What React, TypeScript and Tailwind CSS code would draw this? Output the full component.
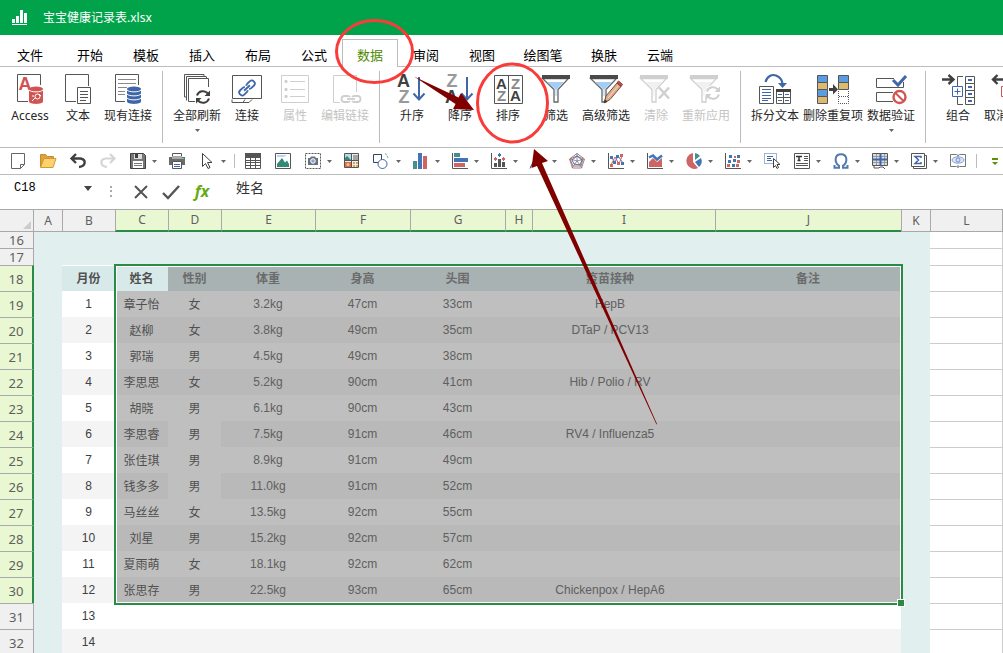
import React from "react";
import clsx from "clsx";

const DARK = "#555555";
const INK = "#404040";
const BLUE = "#3f66a8";
const RED = "#d05454";
const PALE = "#cfcfcf";

const Big = ({ children }: { children: React.ReactNode }) => (
  <svg
    viewBox="0 0 32 32"
    className="h-8 w-8 shrink-0 overflow-visible"
    fill="none"
    aria-hidden="true"
  >
    {children}
  </svg>
);

const Small = ({ children }: { children: React.ReactNode }) => (
  <svg
    viewBox="0 0 16 16"
    className="h-4 w-4 overflow-visible"
    fill="none"
    aria-hidden="true"
  >
    {children}
  </svg>
);

const Caret = ({ className }: { className?: string }) => (
  <svg viewBox="0 0 5 3" className={clsx("h-[3px] w-[5px]", className)} aria-hidden="true">
    <path d="M0 0h5L2.5 3z" fill="currentColor" />
  </svg>
);

const Cylinder = ({ color }: { color: string }) => (
  <>
    <path d="M15 16.500v12c0 3.200 14 3.200 14 0v-12z" fill={color} />
    <ellipse cx="22" cy="16" rx="7" ry="2.500" fill={color} />
  </>
);

const Refresh = ({ color, x, y }: { color: string; x: number; y: number }) => (
  <g transform={`translate(${x} ${y})`}>
    <path d="M-6 -1.500C-4.500-6 1.500-7.500 5-3.500M6 1.500C4.500 6-1.500 7.500-5 3.500" stroke={color} strokeWidth="2" />
    <path d="M7-6.500v5.500H1.500zM-7 6.500V1h5.500z" fill={color} />
  </g>
);

const Chain = ({ color }: { color: string }) => (
  <g stroke={color} strokeWidth="1.800">
    <path d="M-3-3h-3.500a3 3 0 0 0 0 6H-3a3 3 0 0 0 2-1M-1-2a3 3 0 0 0-2-1" />
    <path d="M3-3h3.500a3 3 0 0 1 0 6H3a3 3 0 0 1-2-1M1-2a3 3 0 0 1 2-1" />
    <path d="M-4 0h8" />
  </g>
);

const Funnel = ({ off }: { off?: boolean }) => (
  <>
    <path
      d="M2.500 5.500h26L18 16.500V29h-4V16.500z"
      fill="#fff"
      stroke={off ? PALE : "#666"}
      strokeWidth="1.300"
    />
    <path d="M7 9h17l-7.500 7.500V23h-1v-6.500z" fill={off ? "#f0f0f0" : "#a3cdf7"} />
    <path d="M2 2h28v4H2z" fill={off ? PALE : "#4a4a4a"} />
  </>
);

type LetterProps = { x: number; y: number; s: number; c: string; children: string };

const Letter = ({ x, y, s, c, children }: LetterProps) => (
  <text
    x={x}
    y={y}
    fontSize={s}
    fill={c}
    fontWeight="700"
    textAnchor="middle"
    fontFamily="Liberation Sans, sans-serif"
  >
    {children}
  </text>
);

const DownArrow = () => (
  <path d="M23 4v22M17.500 20.500l5.500 6 5.500-6" stroke={BLUE} strokeWidth="2" />
);

const icons: Record<string, React.ReactNode> = {
  access: (
    <>
      <path d="M26.500 12V1.500h-23v27H14" stroke={DARK} />
      <Letter x={11} y={17} s={18} c={RED}>A</Letter>
      <Cylinder color={RED} />
      <path d="M15 17c2 2.500 12 2.500 14 0M18 28l4-4M25 21l2 2M19 22v2" stroke="#fff" />
      <circle cx="23.500" cy="23.500" r="2.500" stroke="#fff" />
    </>
  ),
  text: (
    <>
      <path d="M26.500 13V1.500h-23v27H14" stroke={DARK} />
      <path d="M15.500 14.500h13v16h-13z" stroke={DARK} />
      <path d="M18 18.500h8M18 21.500h8M18 24.500h8M18 27.500h6" stroke={DARK} />
    </>
  ),
  existing: (
    <>
      <path d="M26.500 12V1.500h-23v27H13" stroke={DARK} />
      <path d="M6 6.500h18M6 10.500h18M6 14.500h9M6 18.500h7M6 21.500h7" stroke="#888" />
      <Cylinder color={BLUE} />
      <path d="M15 17c2 2.500 12 2.500 14 0M15 21c2 2.500 12 2.500 14 0M15 25c2 2.500 12 2.500 14 0" stroke="#fff" />
    </>
  ),
  refresh: (
    <>
      <path d="M3.500 24V1.500H23M5.500 27.500V3.500H25" stroke={DARK} />
      <path d="M27.500 14V5.500h-20v23H14M23 1.500v2M25.500 3.500v2M3.500 24h2" stroke={DARK} />
      <Refresh color={INK} x={22} y={24} />
    </>
  ),
  link: (
    <>
      <path d="M1.500 2.500h29v23h-29z" stroke={DARK} />
      <path d="M1 26.500v3h17l3-3M18 29.500h-6l2-3" stroke={DARK} />
      <g transform="translate(16 15) rotate(-43)">
        <Chain color={BLUE} />
      </g>
    </>
  ),
  props: (
    <>
      <path d="M2.500 2.500h27v27h-27z" stroke={PALE} />
      <path d="M11 8.500h15M11 16.500h15M11 23.500h15" stroke={PALE} />
      <path d="M6 7.500h2v2H6zM6 15.500h2v2H6zM6 22.500h2v2H6z" stroke={PALE} fill={PALE} />
    </>
  ),
  editLink: (
    <>
      <path d="M27.500 19V2.500h-23v27H11" stroke={PALE} />
      <g transform="translate(22 26)">
        <Chain color={PALE} />
      </g>
    </>
  ),
  asc: (
    <>
      <Letter x={7.5} y={14} s={18} c={INK}>A</Letter>
      <Letter x={8} y={30} s={18} c="#999">Z</Letter>
      <DownArrow />
    </>
  ),
  desc: (
    <>
      <Letter x={8} y={14} s={18} c="#999">Z</Letter>
      <Letter x={7.5} y={30} s={18} c={INK}>A</Letter>
      <DownArrow />
    </>
  ),
  sort: (
    <>
      <path d="M2.500 2.500h28v28h-28zM16.500 2.500v28" stroke={DARK} />
      <Letter x={9.5} y={16} s={15} c={INK}>A</Letter>
      <Letter x={9.5} y={28} s={15} c="#888">Z</Letter>
      <Letter x={23.5} y={16} s={15} c="#888">Z</Letter>
      <Letter x={23.5} y={28} s={15} c={INK}>A</Letter>
    </>
  ),
  filter: <Funnel />,
  advFilter: (
    <g transform="translate(-2)">
      <Funnel />
      <path d="M16 30l2-7 11-13 4 3.500-11 13z" fill="#dfb08f" stroke="#76493c" />
      <path d="M29 10l4 3.500 1.500-2-4-3.500z" fill="#c74c48" stroke="#843c38" />
      <path d="M16 30l1-3.500 2.500 2z" fill="#333" />
      <path d="M20 25l10-12" stroke="#f4d5bd" />
    </g>
  ),
  clear: (
    <g transform="translate(-2)">
      <Funnel off />
      <path d="M21 14.500l10 11M31 14.500l-10 11" stroke={PALE} strokeWidth="2.500" />
    </g>
  ),
  reapply: (
    <g transform="translate(-2)">
      <Funnel off />
      <circle cx="25" cy="20" r="8" fill="#fff" />
      <Refresh color={PALE} x={25} y={20} />
    </g>
  ),
  split: (
    <>
      <path d="M6.500 9C8 3 13 1 17 2.500c4 1.500 6 4 6.500 8" stroke={BLUE} strokeWidth="2.200" />
      <path d="M19 10h9l-4.500 5z" fill={BLUE} />
      <path d="M.5 13.500h14v17H.5zM17.500 16.500h14v14h-14z" stroke={DARK} />
      <path d="M17 16h15v3H17z" fill={INK} />
      <path d="M3 16.500h9M3 19.500h9M3 22.500h9M3 25.500h9M3 27.500h6" stroke={BLUE} />
      <path d="M24.500 19v11M18 24.500h13" stroke={DARK} />
      <path d="M19 21.500h4M26 21.500h4M19 27.500h4M26 27.500h4" stroke={BLUE} />
    </>
  ),
  dedupe: (
    <>
      <path d="M.5 2.500h10v7H.5zM.5 16.500h10v7H.5zM21.500 2.500h10v7h-10z" fill="#5b9be0" stroke={DARK} />
      <path d="M.5 9.500h10v7H.5zM.5 23.500h10v7H.5zM21.500 9.500h10v7h-10z" fill="#dcb870" stroke={DARK} />
      <path d="M21.500 18v12.500h10V18M22 23.500h9" stroke={DARK} strokeDasharray="1 1" />
      <path d="M12 15h4v-4l5 5.500-5 5V18h-4z" fill={INK} />
    </>
  ),
  validate: (
    <>
      <path d="M19 5.500H1.500v9h27V9M18 19.500H1.500v9H18" stroke={DARK} />
      <path d="M18 7l5 5 8-9" stroke={BLUE} strokeWidth="3" />
      <circle cx="24.500" cy="24" r="6" stroke={RED} strokeWidth="2.400" fill="#fff" />
      <path d="M20.500 20l8 8" stroke={RED} strokeWidth="2" />
    </>
  ),
  group: (
    <>
      <path d="M0 6.500h10M6.500 2l5 4.500-5 4.500" stroke={INK} strokeWidth="2.400" />
      <path d="M21 3.500h-5.500V14M15.500 24v7.500H21" stroke={DARK} />
      <path d="M10.500 13.500h10v10h-10z" stroke={BLUE} />
      <path d="M12.500 18.500h6M15.500 15.500v6" stroke={BLUE} />
      <path d="M23.500 3.500h9v28h-9zM24 10.500h8M24 17.500h8M24 24.500h8" stroke={DARK} />
      <path d="M26 7h4M26 14h4M26 21h4M26 28h4" stroke={BLUE} strokeWidth="2" />
    </>
  ),
  ungroup: (
    <>
      <path d="M2 6.500h10M5.500 2L1 6.500 5.500 11" stroke={INK} strokeWidth="2.400" />
      <path d="M9.500 13.500h10v10h-10z" stroke={RED} />
    </>
  ),
};

const axes = <path d="M.5 0v15.500H16" stroke={DARK} />;

const tools: { name: string; icon?: React.ReactNode; menu?: boolean; sep?: boolean }[] = [
  { name: "新建", icon: <path d="M1.500.5h13v11l-4 4h-9zM14.500 11.500h-4v4" fill="#fff" stroke="#666" /> },
  {
    name: "打开",
    icon: (
      <>
        <path d="M.5 14V1.500h5l2 2h6V6" fill="#e0a23c" stroke="#c98a2a" />
        <path d="M.5 14.500L4 5.500h12l-3 9z" fill="#fbd26c" stroke="#d19a38" />
      </>
    ),
  },
  {
    name: "撤销",
    icon: <path d="M6 1L1.500 5.500 6 10M2 5.500h8.500c6 1 5.500 8-1.500 8.500" stroke={INK} strokeWidth="2.400" />,
  },
  {
    name: "恢复",
    icon: <path d="M10 1l4.500 4.500L10 10M14 5.500H5.500c-6 1-5.500 8 1.500 8.500" stroke="#d5d5d5" strokeWidth="2.200" />,
  },
  {
    name: "保存",
    menu: true,
    icon: (
      <>
        <path d="M.5.5h13l2 2v13H.5z" fill="#777" stroke={INK} />
        <path d="M4 1h8v5H4z" fill="#ddd" />
        <path d="M5 1h3v4H5z" fill={INK} />
        <path d="M3 8h10v7H3z" fill="#fff" />
        <path d="M4 10.500h8M4 12.500h8" stroke="#777" />
      </>
    ),
  },
  {
    name: "打印",
    icon: (
      <>
        <path d="M3.500.5h9v5h-9z" fill="#fff" stroke={DARK} />
        <path d="M0 4h16v8H0z" fill="#6b6b6b" />
        <path d="M3 3h10v3H3z" fill="#aaa" />
        <path d="M13 5.500h2" stroke="#5cc" />
        <path d="M3.500 8.500h9v7h-9z" fill="#fff" stroke={DARK} />
        <path d="M5 11.500h6M5 13.500h6" stroke={BLUE} />
      </>
    ),
  },
  {
    name: "选择",
    menu: true,
    icon: <path d="M3.500.5v13l3-3 2.500 5 2-1-2.500-5h4.500z" fill="#fff" stroke={INK} />,
  },
  { name: "sep1", sep: true },
  {
    name: "表格",
    icon: (
      <>
        <path d="M.5.5h15v15H.5zM.5 7.500h15M.5 9.500h15M.5 12.500h15M5.500 4v11M10.500 4v11" stroke={DARK} />
        <path d="M0 0h16v5H0z" fill={DARK} />
      </>
    ),
  },
  {
    name: "图片",
    icon: (
      <>
        <path d="M.5.5h15v15H.5z" fill="#fff" stroke={DARK} />
        <path d="M2 2h10L9 4H2zM5 5h3" fill="#b6d6f1" />
        <path d="M2 14v-3l5-6 3 4.500 2-2 2 3.500v3z" fill="#328a76" />
      </>
    ),
  },
  {
    name: "截图",
    menu: true,
    icon: (
      <>
        <path d="M.5.5h15v15H.5z" stroke={DARK} strokeDasharray="2 1" />
        <path d="M3 5h2l1-1.500h4L11 5h2v7H3z" fill="#6a7078" />
        <circle cx="8" cy="8" r="2.300" fill="#7fa8d8" stroke="#fff" />
      </>
    ),
  },
  {
    name: "图库",
    icon: (
      <>
        <path d="M.5.5h14v14H.5z" fill="#eee" stroke="#555" />
        <path d="M1 1h6v6H1z" fill="#b7dbea" />
        <path d="M1 7V5l2-2 4 4z" fill="#328a76" />
        <path d="M9 2h5v5H9z" fill="#a4a4a4" />
        <path d="M1 9h6v5H1z" fill="#dc6a55" />
        <circle cx="4" cy="11.500" r="1.500" fill="#f3c56a" />
        <path d="M9 9h2v2H9zM12 9h2v2h-2zM9 12h2v2H9zM12 12h2v2h-2z" fill="#d9a550" />
        <path d="M7.500 0v15M0 7.500h15" stroke="#555" />
      </>
    ),
  },
  {
    name: "形状",
    menu: true,
    icon: (
      <>
        <path d="M-.5 1.500h8v8h-8z" fill="#fff" stroke="#346" />
        <path d="M11.500.5l3 5" stroke="#5a9c8c" strokeDasharray="2 1" />
        <circle cx="8.500" cy="11" r="4.500" fill="#fff" stroke={BLUE} />
      </>
    ),
  },
  {
    name: "柱形图",
    menu: true,
    icon: (
      <>
        <path d="M0 8h4v8H0z" fill="#43908d" />
        <path d="M5 0h4v16H5z" fill="#4274b8" />
        <path d="M10 3h4v13h-4z" fill="#cf6464" />
      </>
    ),
  },
  {
    name: "条形图",
    menu: true,
    icon: (
      <>
        {axes}
        <path d="M2 0h6v4H2z" fill="#43908d" />
        <path d="M2 5h14v4H2z" fill="#4274b8" />
        <path d="M2 10h11v4H2z" fill="#cf6464" />
      </>
    ),
  },
  {
    name: "组合图",
    menu: true,
    icon: (
      <>
        {axes}
        <path d="M3 10h3v4H3zM7 6h3v8H7zM11 9h3v5h-3z" fill={DARK} />
        <path d="M4 4h1v1h1v2H5v1H4V7H3V5h1zM12 4h1v1h1v2h-1v1h-1V7h-1V5h1z" fill="#cf6464" />
        <path d="M8 0h1v1h1v2H9v1H8V3H7V1h1z" fill="#4274b8" />
      </>
    ),
  },
  {
    name: "曲面图",
    menu: true,
    icon: (
      <>
        <path d="M0 14L8 3v8z" fill="#4274b8" />
        <path d="M8 3l8 4-5 1z" fill="#cf6464" />
        <path d="M0 15.500L3 9" stroke={DARK} />
      </>
    ),
  },
  {
    name: "雷达图",
    menu: true,
    icon: (
      <>
        <path d="M8 .5l7.500 5.500-3 9h-9l-3-9z" stroke="#888" />
        <path d="M8 0v8l7-2M8 8l5 7M8 8l-5 7M8 8L1 6" stroke="#777" strokeWidth="0.800" />
        <path d="M8 3l6 3-2 7H4L1 6z" stroke="#cf6464" />
        <path d="M8 3l5 4-2 5-6-1-2-4z" stroke="#4274b8" />
      </>
    ),
  },
  {
    name: "折线图",
    menu: true,
    icon: (
      <>
        {axes}
        <path d="M3 4l4 5 3-6 5 7" stroke="#4274b8" />
        <path d="M3 12l4-8 4 7 3-8" stroke="#cf6464" />
        <path d="M2 11h3v3H2zM9 9h3v3H9zM12 1h3v3h-3z" fill="#cf6464" />
        <path d="M2 3h3v3H2zM8 2h3v3H8zM13 9h3v3h-3zM5 8h3v3H5z" fill="#4274b8" />
      </>
    ),
  },
  {
    name: "面积图",
    menu: true,
    icon: (
      <>
        {axes}
        <path d="M2 14V9l4-4 4 4 5-4v9z" fill="#cf6464" />
        <path d="M2 4.500L6 2.500l4 4 5-4" stroke="#4274b8" strokeWidth="2.500" />
      </>
    ),
  },
  {
    name: "饼图",
    menu: true,
    icon: (
      <>
        <path d="M7 0v9l5 6A8 8 0 1 1 7 0z" fill="#cf6464" />
        <path d="M9 0a7 7 0 0 1 5 3L9 7z" fill="#43908d" />
        <path d="M15 5a8 8 0 0 1-2 9L9 9z" fill="#4274b8" />
      </>
    ),
  },
  {
    name: "散点图",
    menu: true,
    icon: (
      <>
        {axes}
        <path d="M4 2h3v3H4zM12 2h3v3h-3zM8 6h3v3H8zM3 7h3v3H3zM7 11h3v3H7z" fill="#4274b8" />
        <path d="M9 3h2v2H9zM12 7h3v3h-3zM11 11h3v3h-3zM2 11h3v3H2z" fill="#cf6464" />
      </>
    ),
  },
  {
    name: "选择对象",
    icon: (
      <>
        <path d="M.5.5h12v10H.5z" stroke={BLUE} strokeDasharray="1 1" />
        <path d="M3 3.500h6M3 5.500h4M3 7.500h5" stroke={BLUE} />
        <path d="M9.500 5.500v9l2-2 1.500 3 1.500-1-1.500-3h3z" fill="#fff" stroke={INK} />
      </>
    ),
  },
  {
    name: "文本框",
    menu: true,
    icon: (
      <>
        <path d="M.5.5h15v15H.5z" fill="#fff" stroke={DARK} />
        <path d="M2 3.500h6M5 3.500V8M3.500 7.500h3" stroke="#333" strokeWidth="1.500" />
        <path d="M10 3.500h4M10 5.500h4M10 7.500h4M2 10.500h12M2 12.500h12" stroke={DARK} />
      </>
    ),
  },
  {
    name: "符号",
    menu: true,
    icon: (
      <path
        d="M1.500 12v2.800H6v-2C1 9 1.500 1.200 8 1.200s7 7.800 2 11.600v2h4.500V12"
        stroke="#5379ad"
        strokeWidth="2"
      />
    ),
  },
  {
    name: "冻结",
    menu: true,
    icon: (
      <>
        <path d="M.5.5h15v12H.5z" fill="#ddd" stroke={DARK} />
        <path d="M1 3.500h14M1 9.500h14M4.500 1v11M12.500 1v11" stroke="#999" />
        <path d="M0 6.500h16M8.500 0v13" stroke={BLUE} strokeWidth="2" />
        <path d="M2 13v2h5l1-1h3l2 2" stroke={DARK} />
      </>
    ),
  },
  {
    name: "求和",
    menu: true,
    icon: (
      <>
        <path d="M14 2.500h1.500v13h-13V14" stroke={DARK} />
        <path d="M.5.500h13v13H.5z" fill="#fff" stroke={DARK} />
        <path d="M10 5V3.500H4L7.500 7 4 10.500h6V9" stroke={BLUE} strokeWidth="1.500" />
      </>
    ),
  },
  {
    name: "阅读",
    icon: (
      <>
        <path d="M.5 1.500h6l1.500 1 1.500-1h6v12h-6l-1.500 1-1.500-1h-6zM8 2v2M8 12v2" stroke="#777" />
        <ellipse cx="8" cy="7" rx="6" ry="3.200" fill="#dce6f8" stroke="#86a0d4" />
        <circle cx="8" cy="7" r="2" stroke="#6f8dcc" />
      </>
    ),
  },
  { name: "sep2", sep: true },
];

type Item = { label: string; icon: string; w: string; off?: boolean; menu?: boolean };

const groups: Item[][] = [
  [
    { label: "Access", icon: "access", w: "w-12" },
    { label: "文本", icon: "text", w: "w-12" },
    { label: "现有连接", icon: "existing", w: "w-13" },
  ],
  [
    { label: "全部刷新", icon: "refresh", w: "w-13", menu: true },
    { label: "连接", icon: "link", w: "w-12" },
    { label: "属性", icon: "props", w: "w-12", off: true },
    { label: "编辑链接", icon: "editLink", w: "w-13", off: true },
  ],
  [
    { label: "升序", icon: "asc", w: "w-12" },
    { label: "降序", icon: "desc", w: "w-12" },
    { label: "排序", icon: "sort", w: "w-12" },
    { label: "筛选", icon: "filter", w: "w-12" },
    { label: "高级筛选", icon: "advFilter", w: "w-13" },
    { label: "清除", icon: "clear", w: "w-12", off: true },
    { label: "重新应用", icon: "reapply", w: "w-13", off: true },
  ],
  [
    { label: "拆分文本", icon: "split", w: "w-13" },
    { label: "删除重复项", icon: "dedupe", w: "w-16" },
    { label: "数据验证", icon: "validate", w: "w-13", menu: true },
  ],
  [
    { label: "组合", icon: "group", w: "w-12" },
    { label: "取消组合", icon: "ungroup", w: "w-13" },
  ],
];

const tabs = ["文件", "开始", "模板", "插入", "布局", "公式", "数据", "审阅", "视图", "绘图笔", "换肤", "云端"];

const columns = [
  { name: "A", w: "w-[28px]" },
  { name: "B", w: "w-[53px]" },
  { name: "C", w: "w-[53px]" },
  { name: "D", w: "w-[53px]" },
  { name: "E", w: "w-[94px]" },
  { name: "F", w: "w-[95px]" },
  { name: "G", w: "w-[95px]" },
  { name: "H", w: "w-[27px]" },
  { name: "I", w: "w-[183px]" },
  { name: "J", w: "w-[186px]" },
  { name: "K", w: "w-[29px]" },
  { name: "L", w: "w-[72px]" },
];

const records = [
  ["1", "章子怡", "女", "3.2kg", "47cm", "33cm", "HepB"],
  ["2", "赵柳", "女", "3.8kg", "49cm", "35cm", "DTaP / PCV13"],
  ["3", "郭瑞", "男", "4.5kg", "49cm", "38cm", ""],
  ["4", "李思思", "女", "5.2kg", "90cm", "41cm", "Hib / Polio / RV"],
  ["5", "胡晓", "男", "6.1kg", "90cm", "43cm", ""],
  ["6", "李思睿", "男", "7.5kg", "91cm", "46cm", "RV4 / Influenza5"],
  ["7", "张佳琪", "男", "8.9kg", "91cm", "49cm", ""],
  ["8", "钱多多", "男", "11.0kg", "91cm", "52cm", ""],
  ["9", "马丝丝", "女", "13.5kg", "92cm", "55cm", ""],
  ["10", "刘星", "男", "15.2kg", "92cm", "57cm", ""],
  ["11", "夏雨萌", "女", "18.1kg", "92cm", "62cm", ""],
  ["12", "张思存", "男", "22.5kg", "93cm", "65cm", "Chickenpox / HepA6"],
];

const RowHead = ({ n, on }: { n: number; on?: boolean }) => (
  <th
    scope="row"
    className={clsx(
      "p-0 text-center text-[13px] leading-4 font-normal text-[#5f5f5f] font-['Noto_Sans','Noto_Sans_CJK_SC',sans-serif]",
      n > 16 && "border-t border-t-[#a9a9a9]",
      on ? "border-r-2 border-r-[#2a8b46] bg-[#e9f8d2]" : "border-r border-r-[#a9a9a9] bg-[#f0f0f0]"
    )}
  >
    {n}
  </th>
);

const Outer = ({ first }: { first?: boolean }) => (
  <>
    <td className="bg-[#e1efee] p-0"></td>
    <td className={clsx("bg-white p-0", !first && "border-t border-[#ccc]")}></td>
    <td className="border-l border-[#ccc] bg-white p-0"></td>
  </>
);

const Sheet = () => (
  <div className="relative">
    <table className="w-full table-fixed border-separate border-spacing-0 text-center text-xs leading-4">
      <thead>
        <tr className="h-[23px]">
          <th className="w-[34px] border-y border-r border-[#a9a9a9] bg-[#f0f0f0] p-0">
            <svg viewBox="0 0 8 8" className="mt-2 mr-0.5 ml-auto h-2 w-2" aria-hidden="true">
              <path d="M8 0v8H0z" fill="#ccc" />
            </svg>
          </th>
          {columns.map((col) => (
            <th
              key={col.name}
              scope="col"
              className={clsx(
                col.w,
                "border-t border-[#a9a9a9] p-0 text-xs font-normal text-[#5f5f5f] font-['Noto_Sans','Noto_Sans_CJK_SC',sans-serif]",
                col.name !== "A" && "border-l",
                "CDEFGHIJ".includes(col.name)
                  ? "border-b-2 border-b-[#2a8b46] bg-[#e9f8d2]"
                  : "border-b bg-[#f0f0f0]"
              )}
            >
              {col.name}
            </th>
          ))}
          <th className="border-y border-l border-[#a9a9a9] bg-[#f0f0f0] p-0"></th>
        </tr>
      </thead>
      <tbody>
        <tr className="h-4">
          <RowHead n={16} />
          <td colSpan={10} className="bg-[#e1efee] p-0"></td>
          <Outer first />
        </tr>
        <tr className="h-[17px]">
          <RowHead n={17} />
          <td colSpan={10} className="bg-[#e1efee] p-0"></td>
          <Outer />
        </tr>
        <tr className="h-[26px] text-[#6b6b6b]">
          <RowHead n={18} on />
          <td className="bg-[#e1efee] p-0"></td>
          <th className="border-t border-white bg-[#d8e9e9] p-0 text-[#505050]">月份</th>
          <th className="bg-[#d8e9e9] px-0 pt-0.5 pb-0 text-[#505050]">姓名</th>
          {["性别", "体重", "身高", "头围"].map((name) => (
            <th key={name} className="bg-[#a8b2b3] px-0 pt-0.5 pb-0">{name}</th>
          ))}
          <th colSpan={2} className="bg-[#a8b2b3] px-0 pt-0.5 pb-0">疫苗接种</th>
          <th className="bg-[#a8b2b3] px-0 pt-0.5 pb-0">备注</th>
          <Outer />
        </tr>
        {records.map((row, i) => {
          const band = i % 2 ? "bg-[#b9b9b9]" : "bg-[#bfbfbf]";
          return (
            <tr key={row[0]} className="h-[26px] text-[#606060]">
              <RowHead n={19 + i} on />
              <td className="bg-[#e1efee] p-0"></td>
              <td className={clsx("p-0 text-xs text-[#404040]", i % 2 ? "bg-[#f4f4f4]" : "bg-white")}>{row[0]}</td>
              <td className={clsx("px-0 pt-0.5 pb-0 text-[#505050]", band)}>{row[1]}</td>
              <td className={clsx("px-0 pt-0.5 pb-0 text-[#505050]", i === 5 || i === 7 ? "bg-[#bfbfbf]" : band)}>
                {row[2]}
              </td>
              <td className={clsx("p-0", band)}>{row[3]}</td>
              <td className={clsx("p-0", band)}>{row[4]}</td>
              <td className={clsx("p-0", band)}>{row[5]}</td>
              <td colSpan={2} className={clsx("p-0", band)}>{row[6]}</td>
              <td className={clsx("p-0", band)}></td>
              <Outer />
            </tr>
          );
        })}
        {[13, 14].map((n) => (
          <tr key={n} className="h-[26px]">
            <RowHead n={n + 18} />
            <td className="bg-[#e1efee] p-0"></td>
            <td className={clsx("p-0 text-xs text-[#404040]", n === 14 ? "bg-[#f4f4f4]" : "bg-white")}>{n}</td>
            <td colSpan={8} className={clsx("p-0", n === 14 ? "bg-[#f4f4f4]" : "bg-white")}></td>
            <Outer />
          </tr>
        ))}
      </tbody>
    </table>
    {/* selected range C18:J30 */}
    <div className="pointer-events-none absolute top-[55px] left-[114px] h-[341px] w-[789px] border-2 border-[#2a8b46]">
      <div className="h-full border border-white"></div>
      <div className="absolute -right-[4px] -bottom-[4px] h-2 w-2 border border-white bg-[#2a8b46]"></div>
    </div>
  </div>
);

const Annotations = () => (
  <svg
    width="1003"
    height="653"
    className="pointer-events-none absolute top-0 left-0"
    fill="none"
    aria-hidden="true"
  >
    <ellipse cx="374.500" cy="51.500" rx="38" ry="31" stroke="#f93c3a" strokeWidth="3" />
    <ellipse cx="512.500" cy="103" rx="35" ry="39" stroke="#f93c3a" strokeWidth="3" />
    <path d="M414 76.500l44.500 21 2.500-4.500L474 110l-21-1 2.500-5z" fill="#800000" />
    <path d="M534 149l14 12-6 2L657 424l-.5.500L537 166l-5.500 2z" fill="#800000" />
  </svg>
);

const App = () => {
  return (
    <div className="relative flex h-screen flex-col overflow-hidden bg-white font-['Liberation_Sans','Noto_Sans_CJK_SC',sans-serif] text-black">
      <header className="flex h-[35px] shrink-0 items-center gap-[15px] bg-[#00a34a] pl-3 text-xs text-white font-['Noto_Sans','Noto_Sans_CJK_SC',sans-serif]">
        <svg viewBox="0 0 16 17" className="h-[17px] w-4" fill="#fff" aria-hidden="true">
          <path d="M0 10h3v4H0zM4 7h3v7H4zM8 1h3v13H8zM12 4h3v10h-3zM0 15h15v1H0z" />
        </svg>
        <h1>宝宝健康记录表.xlsx</h1>
      </header>

      <nav className="flex h-8 shrink-0 items-end border-b border-[#bcbcbc] text-[13px]">
        {tabs.map((tab) => (
          <button
            key={tab}
            type="button"
            className={clsx(
              "-mb-px h-7 shrink-0 border border-b-0 pt-1",
              tab === "文件" ? "mr-0.5 w-[60px]" : tab === "绘图笔" ? "w-[66px]" : "w-14",
              tab === "数据" ? "border-[#bcbcbc] bg-white text-[#4e8a00]" : "border-transparent"
            )}
          >
            {tab}
          </button>
        ))}
      </nav>

      <div className="flex h-[81px] shrink-0 overflow-hidden border-b border-[#bcbcbc] pt-1 pl-1.5 text-xs font-['Noto_Sans','Noto_Sans_CJK_SC',sans-serif]">
        {groups.map((group, g) => (
          <div key={g} className="flex shrink-0">
            {g > 0 && <div className="mx-2 h-[72px] w-px bg-[#bcbcbc]"></div>}
            {group.map((item) => (
              <button
                key={item.label}
                type="button"
                disabled={item.off}
                className={clsx(
                  "flex shrink-0 flex-col items-center pt-0.5 whitespace-nowrap",
                  item.w,
                  item.off ? "text-[#c4c4c4]" : "text-[#262626]"
                )}
              >
                <Big>{icons[item.icon]}</Big>
                <span className="mt-[3px] leading-4">{item.label}</span>
                {item.menu && <Caret className="mt-[5px] text-[#666]" />}
              </button>
            ))}
          </div>
        ))}
      </div>

      <div className="flex h-[27px] shrink-0 items-center overflow-hidden border-b border-[#bcbcbc] pl-[3px]">
        {tools.map((tool) =>
          tool.sep ? (
            <div key={tool.name} className="mx-[3px] h-3.5 w-px shrink-0 bg-[#bcbcbc]"></div>
          ) : (
            <button
              key={tool.name}
              type="button"
              aria-label={tool.name}
              className="flex h-6 shrink-0 items-center px-[3px]"
            >
              <span className="flex w-6 justify-center">
                <Small>{tool.icon}</Small>
              </span>
              {tool.menu && (
                <span className="flex w-[9px] justify-center">
                  <Caret className="text-[#666]" />
                </span>
              )}
            </button>
          )
        )}
        <button type="button" aria-label="更多" className="flex w-[30px] shrink-0 justify-center">
          <svg viewBox="0 0 6 7" className="h-[7px] w-1.5" fill="#5c8f0a" aria-hidden="true">
            <path d="M0 0h6v2H0zM0 4h6L3 7z" />
          </svg>
        </button>
      </div>

      <div className="flex h-[34px] shrink-0 items-start pl-3.5">
        <input
          aria-label="名称框"
          defaultValue="C18"
          className="mt-[3px] h-5 w-[70px] text-xs outline-none font-['Liberation_Mono',monospace]"
        />
        <svg viewBox="0 0 8 5" className="mt-[11px] h-[5px] w-2" aria-hidden="true">
          <path d="M0 0h8L4 5z" fill="#444" />
        </svg>
        <svg viewBox="0 0 2 11" className="mt-[11px] ml-[18px] h-[11px] w-0.5" fill="#aaa" aria-hidden="true">
          <path d="M0 0h2v2H0zM0 4h2v2H0zM0 9h2v2H0z" />
        </svg>
        <button type="button" aria-label="取消" className="mt-2 ml-5 h-[18px] w-[18px]">
          <svg viewBox="0 0 18 18" fill="none" stroke="#555" strokeWidth="2" aria-hidden="true">
            <path d="M3 3l12 12M15 3L3 15" />
          </svg>
        </button>
        <button type="button" aria-label="确认" className="mt-2 ml-3 h-[18px] w-[18px]">
          <svg viewBox="0 0 18 18" fill="none" stroke="#555" strokeWidth="2.400" aria-hidden="true">
            <path d="M1 10l5 5L17 3" />
          </svg>
        </button>
        <button
          type="button"
          aria-label="插入函数"
          className="mt-1 ml-2.5 w-6 text-base font-bold text-[#64ab12] italic font-['Open_Sans',sans-serif]"
        >
          fx
        </button>
        <input
          aria-label="编辑栏"
          defaultValue="姓名"
          className="mt-[3px] ml-[22px] h-5 min-w-0 flex-1 text-sm text-[#333] outline-none"
        />
      </div>

      <Sheet />
      <Annotations />
    </div>
  );
};

export default App;
